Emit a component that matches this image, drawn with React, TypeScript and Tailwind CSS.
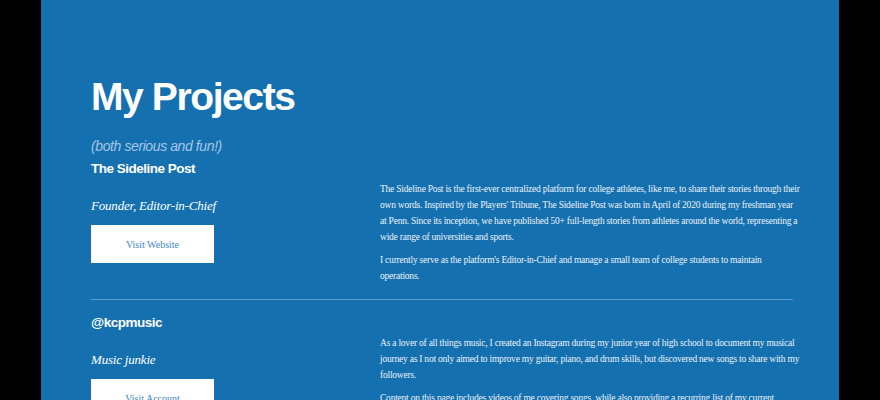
const projects = [
  {
    name: "The Sideline Post",
    role: "Founder, Editor-in-Chief",
    cta: "Visit Website",
    paragraphs: [
      "The Sideline Post is the first-ever centralized platform for college athletes, like me, to share their stories through their own words. Inspired by the Players' Tribune, The Sideline Post was born in April of 2020 during my freshman year at Penn. Since its inception, we have published 50+ full-length stories from athletes around the world, representing a wide range of universities and sports.",
      "I currently serve as the platform's Editor-in-Chief and manage a small team of college students to maintain operations.",
    ],
  },
  {
    name: "@kcpmusic",
    role: "Music junkie",
    cta: "Visit Account",
    paragraphs: [
      "As a lover of all things music, I created an Instagram during my junior year of high school to document my musical journey as I not only aimed to improve my guitar, piano, and drum skills, but discovered new songs to share with my followers.",
      "Content on this page includes videos of me covering songs, while also providing a recurring list of my current favorite tracks and artists.",
    ],
  },
];

export default function App() {
  return (
    <div className="h-[400px] overflow-hidden bg-black">
      <div className="mx-auto min-h-[400px] w-[798px] bg-[#1570af] pl-[50px] pr-[39px] pt-[77px]">
        <h1 className="font-['Liberation_Sans',Arial,sans-serif] text-[39px] font-bold leading-none tracking-[-1.4px] text-white">
          My Projects
        </h1>
        <p className="mt-[21px] font-['Liberation_Sans',Arial,sans-serif] text-[14px] italic leading-[18px] tracking-[-0.4px] text-[#a5c6e6]">
          (both serious and fun!)
        </p>

        {projects.map((p, i) => (
          <div key={p.name}>
            {/* rule stops short of the ragged text edge */}
            {i > 0 && <div className="mr-[7px] h-px bg-[#5b9bd0]" />}
            <div
              className={
                i > 0
                  ? "grid grid-cols-[289px_1fr] pb-[15px] pt-[14px]"
                  : "grid grid-cols-[289px_1fr] pb-[15px] pt-[5px]"
              }
            >
              <div>
                <h2 className="font-['Liberation_Sans',Arial,sans-serif] text-[13.5px] font-bold leading-[18px] tracking-[-0.5px] text-white">
                  {p.name}
                </h2>
                <p className="mt-[19px] font-['Liberation_Serif','Times_New_Roman',serif] text-[13px] italic leading-[18px] tracking-[-0.2px] text-white">
                  {p.role}
                </p>
                <button className="mt-[10px] h-[38px] w-[123px] bg-white font-['Liberation_Serif','Times_New_Roman',serif] text-[10px] text-[#3f87c3]">
                  {p.cta}
                </button>
              </div>
              <div className="pt-[21px]">
                {p.paragraphs.map((t, j) => (
                  <p
                    key={j}
                    className="mb-[7px] font-['Liberation_Serif','Times_New_Roman',serif] text-[9.5px] leading-4 tracking-[-0.22px] text-[#eaf2f9] last:mb-0"
                  >
                    {t}
                  </p>
                ))}
              </div>
            </div>
          </div>
        ))}
      </div>
    </div>
  );
}
